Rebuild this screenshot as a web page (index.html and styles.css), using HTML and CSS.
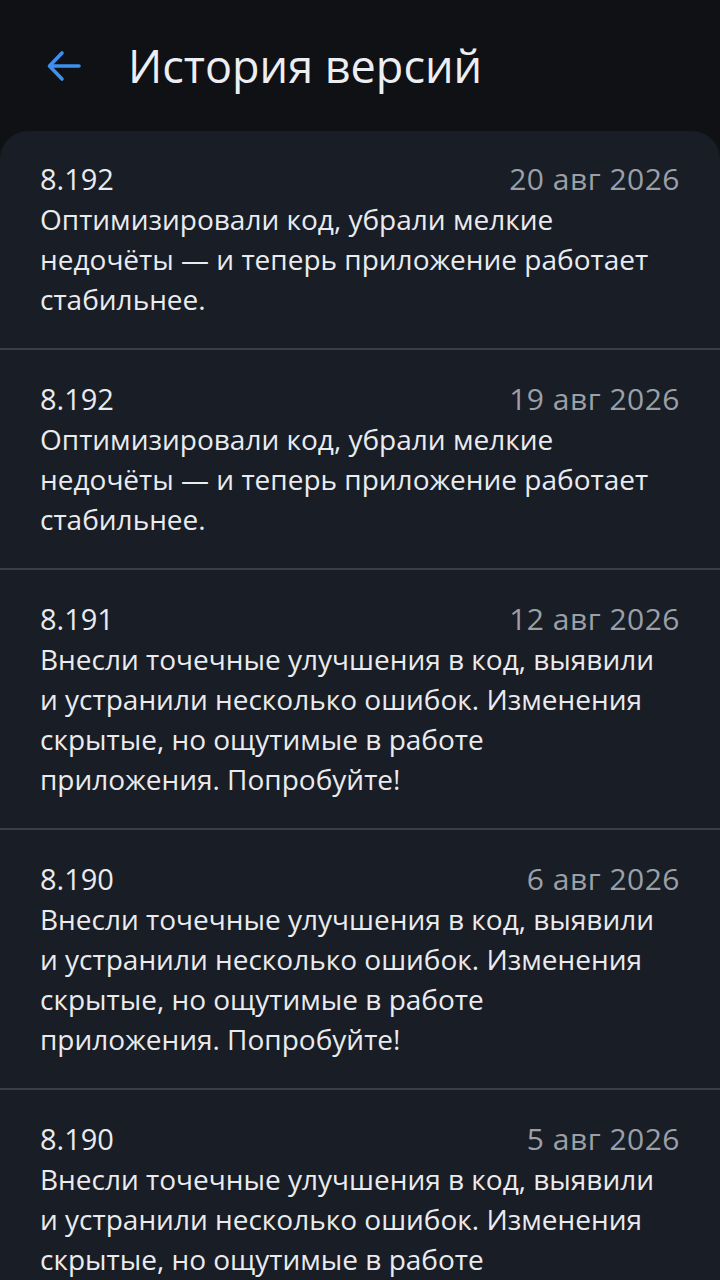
FILE: index.html
```html
<!DOCTYPE html>
<html lang="ru">
<head>
    <meta charset="UTF-8">
    <meta name="viewport" content="width=device-width, initial-scale=1.0">
    <title>История версий</title>
    <link rel="stylesheet" href="styles.css">
</head>
<body>
    <header class="topbar">
        <button class="back" aria-label="Назад">
            <svg width="36" height="36" viewBox="0 0 36 36" fill="none" stroke="currentColor" stroke-width="3.6" stroke-linecap="round" stroke-linejoin="round">
                <path d="M33 18H4M16 5L3.5 18L16 31"/>
            </svg>
        </button>
        <h1>История версий</h1>
    </header>

    <main class="list">
        <div class="entry">
            <div class="entry-head">
                <span class="version">8.192</span>
                <span class="date">20 авг 2026</span>
            </div>
            <p class="notes">Оптимизировали код, убрали мелкие недочёты — и теперь приложение работает стабильнее.</p>
        </div>

        <div class="entry">
            <div class="entry-head">
                <span class="version">8.192</span>
                <span class="date">19 авг 2026</span>
            </div>
            <p class="notes">Оптимизировали код, убрали мелкие недочёты — и теперь приложение работает стабильнее.</p>
        </div>

        <div class="entry">
            <div class="entry-head">
                <span class="version">8.191</span>
                <span class="date">12 авг 2026</span>
            </div>
            <p class="notes">Внесли точечные улучшения в код, выявили и устранили несколько ошибок. Изменения скрытые, но ощутимые в работе приложения. Попробуйте!</p>
        </div>

        <div class="entry">
            <div class="entry-head">
                <span class="version">8.190</span>
                <span class="date">6 авг 2026</span>
            </div>
            <p class="notes">Внесли точечные улучшения в код, выявили и устранили несколько ошибок. Изменения скрытые, но ощутимые в работе приложения. Попробуйте!</p>
        </div>

        <div class="entry">
            <div class="entry-head">
                <span class="version">8.190</span>
                <span class="date">5 авг 2026</span>
            </div>
            <p class="notes">Внесли точечные улучшения в код, выявили и устранили несколько ошибок. Изменения скрытые, но ощутимые в работе приложения. Попробуйте!</p>
        </div>
    </main>
</body>
</html>
```

FILE: styles.css
```css
html, body {
    margin: 0;
    padding: 0;
}

body {
    font-family: 'Open Sans', 'Noto Sans', sans-serif;
    background: #0f1115;
    color: #e9ebef;
    height: 1280px;
    overflow: hidden;
}

.topbar {
    height: 131px;
    display: flex;
    align-items: center;
    padding-left: 46px;
    box-sizing: border-box;
}

.back {
    background: none;
    border: none;
    padding: 0;
    color: #3d8ff0;
    width: 36px;
    height: 36px;
    display: flex;
    margin-right: 46px;
}

h1 {
    margin: 0;
    font-size: 45px;
    font-weight: 400;
    color: #eceef2;
}

.list {
    background: #191d25;
    border-radius: 28px 28px 0 0;
}

.entry {
    padding: 29px 40px;
    border-bottom: 2px solid #3a3e46;
}

.entry:first-child {
    padding-top: 28px;
}

.entry-head {
    display: flex;
    justify-content: space-between;
    font-size: 29px;
    line-height: 40px;
}

.date {
    color: #9ba0a8;
    font-size: 30px;
    letter-spacing: 0.5px;
}

.notes {
    margin: 0;
    max-width: 620px;
    font-size: 28px;
    line-height: 40px;
}
```
